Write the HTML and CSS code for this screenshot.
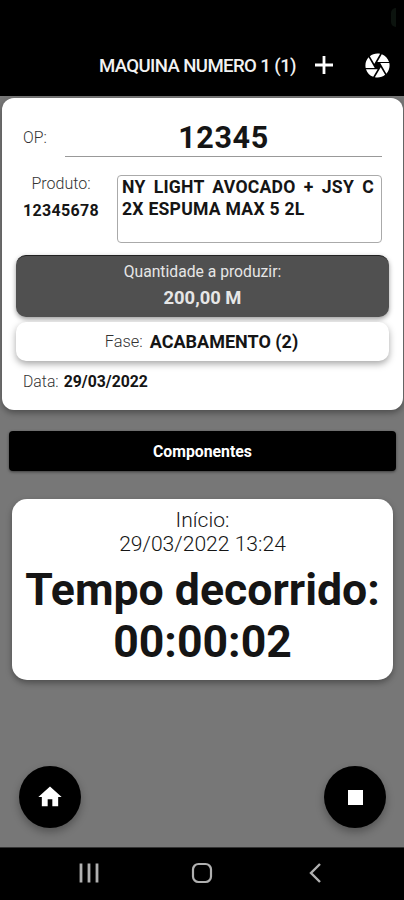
FILE: index.html
```
<!DOCTYPE html>
<html lang="pt-BR">
<head>
  <meta charset="UTF-8">
  <meta name="viewport" content="width=device-width, initial-scale=1">
  <title>Maquina</title>
  <link rel="stylesheet" href="styles.css">
</head>
<body>

  <header class="topbar">
    <span class="edge-handle"></span>
    <h1>MAQUINA NUMERO 1 (1)</h1>
    <button class="icon-btn add-btn" aria-label="Adicionar">
      <svg width="18" height="18" viewBox="0 0 18 18"><path d="M9 0v18M0 9h18" stroke="#fff" stroke-width="2.8"/></svg>
    </button>
    <button class="icon-btn" aria-label="Camera">
      <svg width="29" height="29" viewBox="0 0 24 24" fill="#fff"><path d="M9.4 10.5l4.77-8.26C13.47 2.09 12.75 2 12 2c-2.4 0-4.6.85-6.32 2.25l3.66 6.35.06-.1zM21.54 9c-.92-2.92-3.15-5.26-6-6.34L11.88 9h9.66zm.26 1h-7.49l.29.5 4.76 8.25C20.97 16.97 22 14.61 22 12c0-.69-.07-1.35-.2-2zM8.54 12l-3.9-6.75C3.01 7.03 2 9.39 2 12c0 .69.07 1.35.2 2h7.49l-1.15-2zm-6.08 3c.92 2.92 3.15 5.26 6 6.34L12.12 15H2.46zm11.27 0l-3.9 6.76c.7.15 1.42.24 2.17.24 2.4 0 4.6-.85 6.32-2.25l-3.66-6.35-.93 1.6z"/></svg>
    </button>
  </header>

  <main>
    <!-- Ordem de producao -->
    <section class="card order">
      <div class="op-row">
        <span class="label">OP:</span>
        <div class="op-value">12345</div>
      </div>

      <div class="product-row">
        <div class="product-code">
          <span class="label">Produto:</span>
          <strong>12345678</strong>
        </div>
        <div class="product-desc">NY LIGHT AVOCADO + JSY C 2X ESPUMA MAX 5 2L</div>
      </div>

      <div class="quantity">
        <span>Quantidade a produzir:</span>
        <strong>200,00 M</strong>
      </div>

      <div class="phase">
        <span class="label">Fase:</span>
        <strong>ACABAMENTO (2)</strong>
      </div>

      <div class="date">
        <span class="label">Data:</span>
        <strong>29/03/2022</strong>
      </div>
    </section>

    <button class="components-btn">Componentes</button>

    <!-- Tempo -->
    <section class="card timer">
      <p class="start">Início:</p>
      <p class="start-date">29/03/2022 13:24</p>
      <p class="elapsed">Tempo decorrido:</p>
      <p class="elapsed clock">00:00:02</p>
    </section>

    <div class="actions">
      <button class="fab" aria-label="Inicio">
        <svg width="28" height="28" viewBox="0 0 24 24" fill="#fff"><path d="M10 20v-6h4v6h5v-8h3L12 3 2 12h3v8z"/></svg>
      </button>
      <button class="fab" aria-label="Parar">
        <svg width="15" height="15" viewBox="0 0 15 15" fill="#fff"><rect width="15" height="15"/></svg>
      </button>
    </div>
  </main>

  <nav class="navbar">
    <svg width="20" height="20" viewBox="0 0 20 20" stroke="#b0b0b0" stroke-width="2.8"><path d="M2 .5v19M10 .5v19M18 .5v19"/></svg>
    <svg width="22" height="22" viewBox="0 0 22 22" fill="none" stroke="#b0b0b0" stroke-width="2.2"><rect x="2" y="2" width="18" height="18" rx="5.5"/></svg>
    <svg width="20" height="20" viewBox="0 0 20 20" fill="none" stroke="#b0b0b0" stroke-width="2.4"><path d="M15 1L6 10l9 9"/></svg>
  </nav>

</body>
</html>
```
FILE: styles.css
```
* {
  margin: 0;
  padding: 0;
  box-sizing: border-box;
}

body {
  font-family: Roboto, sans-serif;
  background: #777;
  color: #151515;
  height: 900px;
  display: flex;
  flex-direction: column;
  overflow: hidden;
}

button {
  border: none;
  background: #000;
  color: #fff;
  font-family: inherit;
  cursor: pointer;
}

svg {
  display: block;
}

.topbar {
  position: relative;
  height: 96px;
  background: #000;
  color: #fff;
  display: flex;
  justify-content: flex-end;
  align-items: center;
  padding: 34px 12px 0 0;
}

.topbar h1 {
  padding-top: 2px;
  font-size: 18.6px;
  font-weight: 500;
  letter-spacing: -0.6px;
  color: #f2f2f2;
  white-space: nowrap;
}

.add-btn {
  margin: 0 30px 0 19px;
}

/* side panel handle */
.edge-handle {
  position: absolute;
  right: 8px;
  top: 8px;
  width: 5px;
  height: 19px;
  background: #0c130e;
  border-radius: 5px 0 0 5px;
}

main {
  flex: 1;
  display: flex;
  flex-direction: column;
  padding-top: 2px;
}

.card {
  background: #fff;
  box-shadow: 0 3px 6px rgba(0, 0, 0, 0.35);
}

.label {
  font-weight: 300;
  color: #333;
}

.order {
  margin: 0 1px 0 2px;
  height: 312px;
  border-radius: 12px;
  padding: 18px 14px 0;
}

.op-row {
  display: flex;
  align-items: center;
  height: 41px;
  padding: 0 7px;
}

.op-row .label {
  width: 42px;
  padding-top: 2px;
  font-size: 15.8px;
}

.op-value {
  flex: 1;
  height: 41px;
  line-height: 43px;
  border-bottom: 1px solid #999;
  font-size: 30.5px;
  font-weight: bold;
  letter-spacing: 0.6px;
  text-align: center;
}

.product-row {
  display: flex;
  margin-top: 18px;
  padding: 0 7px;
}

.product-code {
  width: 76px;
  margin-right: 18px;
  text-align: center;
  font-size: 16px;
  line-height: 27px;
  margin-top: -5px;
}

.product-code span {
  display: block;
}

.product-code strong {
  display: block;
  letter-spacing: 0.3px;
}

.product-desc {
  flex: 1;
  height: 68px;
  border: 1px solid #aaa;
  border-radius: 4px;
  padding: 1px 7px 0 4px;
  font-size: 17.6px;
  font-weight: bold;
  letter-spacing: 0.25px;
  line-height: 21.5px;
  text-align: justify;
}

.quantity {
  height: 62px;
  margin-top: 12px;
  border-radius: 10px;
  border-top: 1px solid #222;
  background: #505050;
  color: #e6e6e6;
  text-align: center;
  font-size: 15.7px;
  line-height: 26px;
  padding-top: 3px;
  box-shadow: 0 2px 5px rgba(0, 0, 0, 0.4);
}

.quantity span,
.quantity strong {
  display: block;
}

.quantity strong {
  font-size: 18.4px;
}

.phase {
  height: 39px;
  margin-top: 5px;
  border-radius: 10px;
  background: #fff;
  box-shadow: 0 3px 7px rgba(0, 0, 0, 0.35);
  display: flex;
  justify-content: center;
  align-items: center;
  gap: 7px;
  padding-right: 2px;
  font-size: 16.4px;
}

.phase strong {
  font-size: 18px;
}

.date {
  display: flex;
  gap: 5px;
  margin-top: 11px;
  padding-left: 7px;
  font-size: 15.8px;
}

.components-btn {
  height: 40px;
  margin: 21px 8px 0 9px;
  border-radius: 4px;
  font-size: 15.8px;
  font-weight: bold;
  box-shadow: 0 1px 3px rgba(0, 0, 0, 0.5);
}

.timer {
  height: 181px;
  margin: 28px 11px 0 12px;
  border-radius: 15px;
  padding-top: 9px;
  text-align: center;
  white-space: nowrap;
}

.start,
.start-date {
  font-size: 21.1px;
  line-height: 24px;
  font-weight: 300;
}

.elapsed {
  margin-top: 8px;
  font-size: 44.6px;
  line-height: 52px;
  font-weight: bold;
}

.clock {
  margin-top: 0;
}

.actions {
  display: flex;
  justify-content: space-between;
  margin: auto 18px 19px 19px;
}

.fab {
  width: 62px;
  height: 62px;
  border-radius: 50%;
  display: flex;
  justify-content: center;
  align-items: center;
  box-shadow: 0 4px 8px rgba(0, 0, 0, 0.3);
}

.navbar {
  height: 53px;
  background: #000;
  border-top: 1px solid #333;
  display: flex;
  justify-content: space-between;
  align-items: center;
  padding: 0 79px 2px;
}
```
